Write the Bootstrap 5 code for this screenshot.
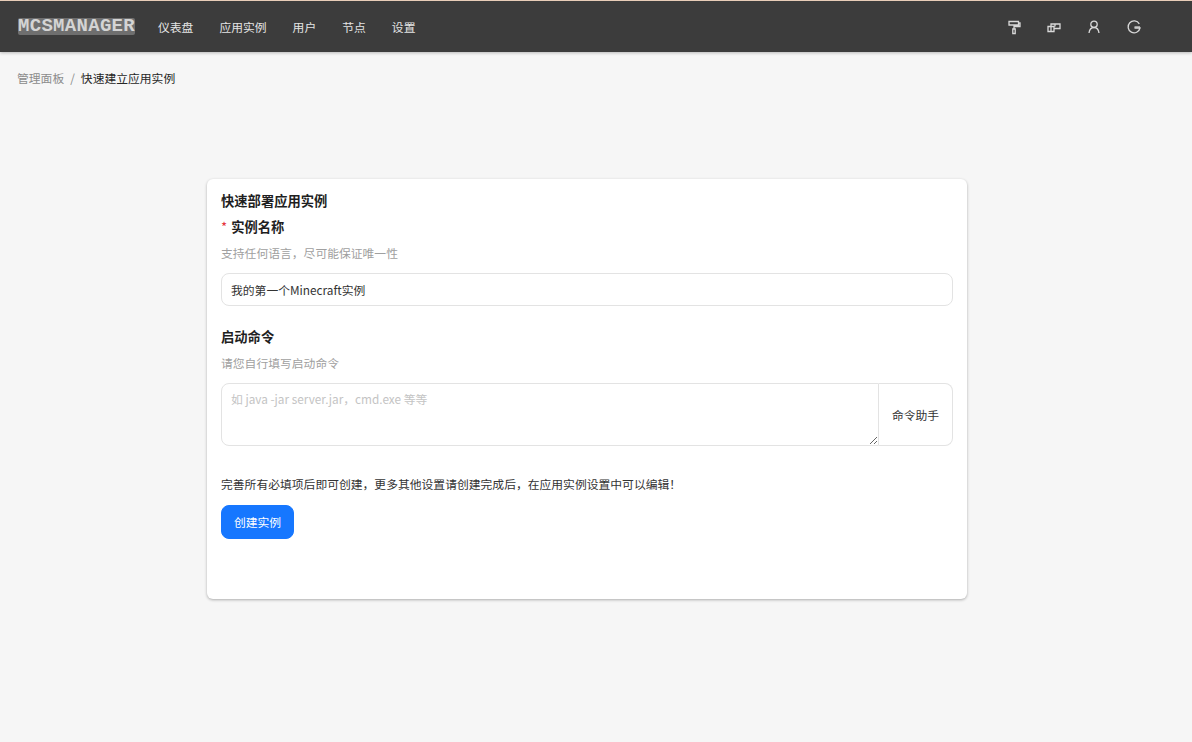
<!DOCTYPE html>
<html lang="zh-CN">
<head>
    <meta charset="UTF-8">
    <meta name="viewport" content="width=device-width,initial-scale=1">
    <title>快速建立应用实例</title>
    <link rel="stylesheet" href="https://cdn.jsdelivr.net/npm/bootstrap@5.3.3/dist/css/bootstrap.min.css">
    <style>
        body { background: #f6f6f6; font-family: "Noto Sans CJK SC", "Liberation Sans", sans-serif; font-size: 11.8px; color: #262626; min-height: 742px; }
        .top-bar { height: 52px; background: #3c3c3c; border-top: 1px solid #e8cdb8; box-shadow: 0 1px 3px rgba(0,0,0,.25); padding: 0 16px 0 18px; }
        .logo-text { font-family: "Liberation Mono", monospace; font-weight: 700; font-size: 19px; line-height: 17px; letter-spacing: .3px; width: 117px; height: 17px; color: #d4d4d4; background: #6f6f6f; border-radius: 2px; text-align: center; overflow: hidden; white-space: nowrap; }
        .top-link { color: #e4e4e4; text-decoration: none; font-size: 11.8px; }
        .top-links { gap: 26px; margin-left: 23px; }
        .top-icons { gap: 24px; margin-right: 34px; }
        .top-icons svg { display: block; width: 16px; height: 16px; fill: none; stroke: #d8d8d8; stroke-width: 1.3; }
        .crumbs { padding: 17px 17px 0; margin-bottom: 92px; line-height: 18px; }
        .crumbs .breadcrumb-item, .crumbs a { color: #8c8c8c; text-decoration: none; }
        .crumbs .breadcrumb-item.active { color: #262626; }
        .crumbs .breadcrumb-item + .breadcrumb-item { padding-left: 6px; }
        .crumbs .breadcrumb-item + .breadcrumb-item::before { padding-right: 6px; color: #8c8c8c; }
        .deploy-panel { width: 760px; height: 420px; margin-left: 207px; border: 0; border-radius: 6px; box-shadow: 0 1px 3px rgba(0,0,0,.3); padding: 12px 14px; }
        .panel-title { font-size: 13.3px; font-weight: 700; line-height: 19px; margin-bottom: 8px; color: #1f1f1f; }
        .field-title { font-size: 13.3px; font-weight: 700; line-height: 18px; margin-bottom: 8px; color: #1f1f1f; }
        .req-mark { color: #e5303a; font-weight: 400; margin-right: 4px; }
        .field-hint { color: #a0a0a0; line-height: 18px; margin-bottom: 11px; }
        .deploy-panel .form-control { font-size: 11.8px; color: #333; border-color: #e3e3e3; border-radius: 8px; padding: 6px 9px; }
        .name-input { height: 33px; margin-bottom: 22px; }
        .deploy-panel textarea.form-control { height: 63px; min-height: 63px; border-top-right-radius: 0; border-bottom-right-radius: 0; }
        .deploy-panel textarea.form-control::placeholder { color: #c4c4c4; }
        .helper-btn { width: 74px; font-size: 11.8px; color: #333; background: #fff; border: 1px solid #e3e3e3; border-left: 0; border-radius: 0 8px 8px 0; padding: 0; }
        .finish-note { line-height: 18px; margin: 29px 0 12px; color: #333; }
        .create-btn { width: 73px; height: 34px; padding: 0; font-size: 11.8px; border-radius: 8px; background: #1677ff; border-color: #1677ff; }
    </style>
</head>
<body>
<header class="top-bar d-flex align-items-center">
    <div class="logo-text">MCSMANAGER</div>
    <nav class="top-links d-flex">
        <a class="top-link" href="#">仪表盘</a>
        <a class="top-link" href="#">应用实例</a>
        <a class="top-link" href="#">用户</a>
        <a class="top-link" href="#">节点</a>
        <a class="top-link" href="#">设置</a>
    </nav>
    <div class="top-icons d-flex ms-auto">
        <svg viewBox="0 0 16 16"><path d="M3 2.5h9.5v3.5H3zM12.5 4H14v3.5H8V10M6.8 10h2.4v4.5H6.8z"/></svg>
        <svg viewBox="0 0 16 16"><path d="M2 7.5h6v5H2zM5 7.500V5h4v2.500M9 5h5v4.500H8M5 7.500v5"/></svg>
        <svg viewBox="0 0 16 16"><circle cx="8" cy="5.300" r="3.200"/><path d="M3 14c.4-3.300 2.300-5.500 5-5.500s4.600 2.200 5 5.500"/></svg>
        <svg viewBox="0 0 16 16"><path d="M13.300 4.800A6 6 0 1 0 14 9H8.500"/><path d="M8.500 8h5.500"/></svg>
    </div>
</header>

<nav class="crumbs">
    <ol class="breadcrumb mb-0">
        <li class="breadcrumb-item"><a href="#">管理面板</a></li>
        <li class="breadcrumb-item active">快速建立应用实例</li>
    </ol>
</nav>

<main class="card deploy-panel">
    <div class="panel-title">快速部署应用实例</div>
    <div class="field-title"><span class="req-mark">*</span>实例名称</div>
    <div class="field-hint">支持任何语言，尽可能保证唯一性</div>
    <input type="text" class="form-control name-input" value="我的第一个Minecraft实例">
    <div class="field-title">启动命令</div>
    <div class="field-hint">请您自行填写启动命令</div>
    <div class="d-flex">
        <textarea class="form-control" placeholder="如 java -jar server.jar，cmd.exe 等等"></textarea>
        <button type="button" class="helper-btn flex-shrink-0">命令助手</button>
    </div>
    <div class="finish-note">完善所有必填项后即可创建，更多其他设置请创建完成后，在应用实例设置中可以编辑！</div>
    <div><button type="button" class="btn btn-primary create-btn">创建实例</button></div>
</main>
<script src="https://cdn.jsdelivr.net/npm/bootstrap@5.3.3/dist/js/bootstrap.bundle.min.js"></script>
</body>
</html>
